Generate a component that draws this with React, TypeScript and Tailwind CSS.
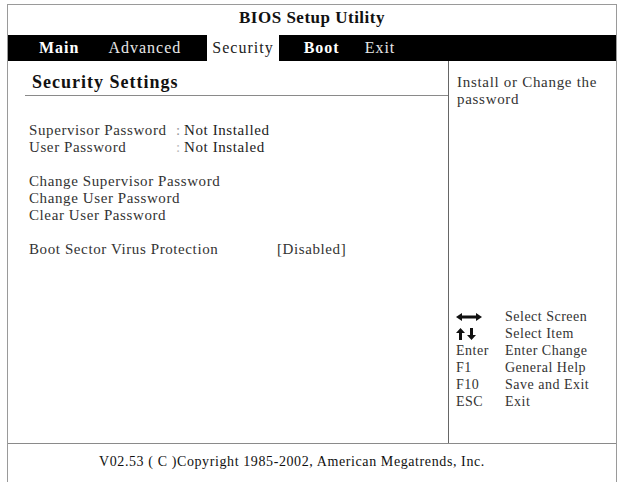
import React from "react";

const serif = { fontFamily: '"Liberation Serif", "Times New Roman", serif' };

function LeftRightArrow() {
  return (
    <svg width="26" height="8" viewBox="0 0 26 8" className="block">
      <polygon points="0,4 6,0 6,8" fill="#111" />
      <rect x="5" y="2.5" width="16" height="3" fill="#111" />
      <polygon points="26,4 20,0 20,8" fill="#111" />
    </svg>
  );
}

function UpDownArrow() {
  return (
    <svg width="20" height="12" viewBox="0 0 20 12" className="block">
      <polygon points="4.5,0 0,5 3,5 3,12 6,12 6,5 9,5" fill="#111" />
      <polygon points="15.5,12 11,7 14,7 14,0 17,0 17,7 20,7" fill="#111" />
    </svg>
  );
}

const legend: [React.ReactNode, string][] = [
  [<LeftRightArrow />, "Select Screen"],
  [<UpDownArrow />, "Select Item"],
  ["Enter", "Enter Change"],
  ["F1", "General Help"],
  ["F10", "Save and Exit"],
  ["ESC", "Exit"],
];

export default function App() {
  return (
    <div className="w-[618px] h-[482px] bg-white overflow-hidden pt-[4px] pl-[7px]" style={serif}>
      <div className="w-[610px] h-[478px] border-l border-t border-r border-[#9a9a9a] flex flex-col">
        {/* Title */}
        <div className="h-[30px] flex items-center justify-center pb-[4px] text-[17px] font-bold tracking-[0.5px] text-[#111]">
          BIOS Setup Utility
        </div>
        {/* Menu bar */}
        <div className="h-[26px] bg-black flex items-stretch pl-[31px] text-[16px] tracking-[1px] text-white">
          <div className="flex items-center font-bold">Main</div>
          <div className="flex items-center ml-[29px] text-[#e8e8e8]">Advanced</div>
          <div className="flex items-center ml-[26px] bg-white text-[#222] px-[5px]">Security</div>
          <div className="flex items-center ml-[25px] font-bold">Boot</div>
          <div className="flex items-center ml-[25px] text-[#e8e8e8]">Exit</div>
        </div>
        {/* Main */}
        <div className="h-[383px] flex border-b border-[#8a8a8a]">
          <div className="w-[441px] border-r border-[#666] flex flex-col">
            <div className="ml-[17px] border-b border-[#8a8a8a] pt-[10px] pb-[2px] pl-[7px] h-[35px]">
              <div className="text-[18px] leading-[22px] font-bold tracking-[1px] text-[#111]">Security Settings</div>
            </div>
            <div className="pl-[21px] pt-[26px] text-[15px] leading-[17px] tracking-[0.6px] text-[#333]">
              <div className="grid grid-cols-[147px_8px_1fr]">
                <div>Supervisor Password</div>
                <div className="text-[#999]">:</div>
                <div className="text-[#222]">Not Installed</div>
                <div>User Password</div>
                <div className="text-[#bbb]">:</div>
                <div className="text-[#222]">Not Instaled</div>
              </div>
              <div className="h-[17px]" />
              <div>Change Supervisor Password</div>
              <div>Change User Password</div>
              <div>Clear User Password</div>
              <div className="h-[17px]" />
              <div className="grid grid-cols-[248px_1fr]">
                <div>Boot Sector Virus Protection</div>
                <div>[Disabled]</div>
              </div>
            </div>
          </div>
          <div className="flex-1 flex flex-col">
            <div className="pl-[8px] pt-[13px] text-[15px] leading-[17px] tracking-[0.7px] text-[#333]">
              <div>Install or Change the</div>
              <div>password</div>
            </div>
            <div className="mt-auto pb-[33px] pl-[7px] text-[14px] leading-[17px] tracking-[0.5px] text-[#333]">
              {legend.map(([k, d], i) => (
                <div key={i} className="flex h-[17px] items-center">
                  <div className="w-[49px] flex items-center">{k}</div>
                  <div>{d}</div>
                </div>
              ))}
            </div>
          </div>
        </div>
        {/* Footer */}
        <div className="flex-1 pt-[9px] pl-[91px] text-[14px] leading-[18px] tracking-[0.6px] text-[#111]">
          V02.53 ( C )Copyright 1985-2002, American Megatrends, Inc.
        </div>
      </div>
    </div>
  );
}
